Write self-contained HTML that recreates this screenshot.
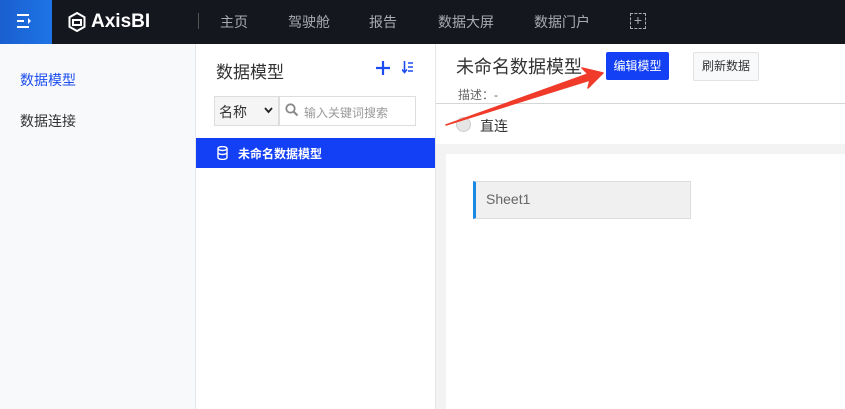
<!DOCTYPE html>
<html><head><meta charset="utf-8"><style>
*{margin:0;padding:0;box-sizing:border-box}
body{width:845px;height:409px;overflow:hidden;background:#fff;font-family:"Liberation Sans","Noto Sans CJK SC",sans-serif;position:relative}
.hdr{position:absolute;left:0;top:0;width:845px;height:44px;background:#15171f}
.menu{position:absolute;left:0;top:0;width:52px;height:44px;background:linear-gradient(90deg,#1a5fd0,#1e74e6)}
.nav{position:absolute;top:12px;color:#a9abb2;font-size:14px}
.abs{position:absolute}
</style></head><body>
<div class="hdr"></div>
<div class="menu"><svg class="abs" style="left:16px;top:13px" width="18" height="16"><path d="M1 2H13M1 8H8M1 14H13" stroke="#fff" stroke-width="2"/><path d="M12 5l3 3-3 3z" fill="#fff"/></svg></div>
<svg class="abs" style="left:68px;top:12px" width="18" height="20" viewBox="0 0 18 20"><path d="M9 1L16.5 5.2V14.8L9 19L1.5 14.8V5.2Z" fill="none" stroke="#fff" stroke-width="2"/><path d="M5 8h8v5H5z" fill="none" stroke="#fff" stroke-width="2"/></svg>
<div class="abs" style="left:91px;top:11px;color:#fff;font-size:19px;font-weight:bold">AxisBI</div>
<div class="abs" style="left:198px;top:13px;width:1px;height:16px;background:#555"></div>
<div class="nav" style="left:220px">主页</div>
<div class="nav" style="left:288px">驾驶舱</div>
<div class="nav" style="left:369px">报告</div>
<div class="nav" style="left:438px">数据大屏</div>
<div class="nav" style="left:534px">数据门户</div>
<div class="abs" style="left:630px;top:13px;width:16px;height:16px;border:1px dashed #a9abb2;color:#a9abb2;font-size:14px;line-height:13px;text-align:center">+</div>

<div class="abs" style="left:0;top:44px;width:196px;height:365px;background:#f8f9fb;border-right:1px solid #e4e6ea"></div>
<div class="abs" style="left:20px;top:70px;font-size:14px;color:#1b4df0">数据模型</div>
<div class="abs" style="left:20px;top:111px;font-size:14px;color:#333">数据连接</div>

<div class="abs" style="left:435px;top:44px;width:1px;height:365px;background:#e4e6ea"></div>
<div class="abs" style="left:216px;top:58px;font-size:17px;color:#333">数据模型</div>
<svg class="abs" style="left:376px;top:61px" width="14" height="14"><path d="M7 0V14M0 7H14" stroke="#1b4df0" stroke-width="2.2"/></svg>
<svg class="abs" style="left:402px;top:61px" width="12" height="13"><path d="M2.5 0V11M0 8.5l2.5 3 2.5-3" fill="none" stroke="#1b4df0" stroke-width="1.6"/><path d="M6 2h5M6 6h5M6 10h5" stroke="#1b4df0" stroke-width="1.6"/></svg>
<div class="abs" style="left:214px;top:96px;width:65px;height:30px;border:1px solid #ddd;background:#f5f5f5;font-size:14px;color:#333;padding:5px 4px">名称</div>
<svg class="abs" style="left:264px;top:107px" width="9" height="7"><path d="M1 1l3.5 4 3.5-4" fill="none" stroke="#222" stroke-width="1.8"/></svg>
<div class="abs" style="left:279px;top:96px;width:137px;height:30px;border:1px solid #ddd;font-size:12px;color:#999;padding:7px 0 0 24px">输入关键词搜索</div>
<svg class="abs" style="left:285px;top:103px" width="14" height="14"><circle cx="5.5" cy="5.5" r="4.2" fill="none" stroke="#888" stroke-width="1.8"/><path d="M8.5 8.5l4 4" stroke="#888" stroke-width="2"/></svg>
<div class="abs" style="left:196px;top:138px;width:239px;height:30px;background:#1440f5"></div>
<svg class="abs" style="left:217px;top:146px" width="11" height="14"><ellipse cx="5.5" cy="2.5" rx="4.5" ry="2" fill="none" stroke="#fff" stroke-width="1.4"/><path d="M1 2.5v9c0 1 2 2 4.5 2s4.5-1 4.5-2v-9M1 6.5c0 1 2 2 4.5 2s4.5-1 4.5-2" fill="none" stroke="#fff" stroke-width="1.4"/></svg>
<div class="abs" style="left:238px;top:145px;font-size:12px;color:#fff;font-weight:bold">未命名数据模型</div>

<div class="abs" style="left:456px;top:53px;font-size:18px;color:#333">未命名数据模型</div>
<div class="abs" style="left:606px;top:52px;width:63px;height:28px;background:#1440f5;border-radius:2px;color:#fff;font-size:12px;text-align:center;line-height:28px">编辑模型</div>
<div class="abs" style="left:693px;top:52px;width:66px;height:29px;background:#f8f9fb;border:1px solid #e2e2e2;border-radius:2px;color:#333;font-size:12px;text-align:center;line-height:27px">刷新数据</div>
<div class="abs" style="left:458px;top:86px;font-size:12px;color:#666">描述：-</div>
<div class="abs" style="left:436px;top:103px;width:409px;height:1px;background:#d6d6d6"></div>
<div class="abs" style="left:456px;top:117px;width:15px;height:15px;border-radius:50%;background:#e6e6e6;border:1px solid #ccc"></div>
<div class="abs" style="left:480px;top:116px;font-size:14px;color:#333">直连</div>
<div class="abs" style="left:436px;top:144px;width:409px;height:265px;background:#f3f3f3"></div>
<div class="abs" style="left:446px;top:154px;width:399px;height:255px;background:#fff"></div>
<div class="abs" style="left:473px;top:181px;width:218px;height:38px;background:#f0f0f0;border:1px solid #ddd;border-left:3px solid #1e88e5;font-size:14px;color:#666;padding:9px 0 0 10px">Sheet1</div>
<svg class="abs" style="left:0;top:0" width="845" height="409"><path d="M446 125L590 80L588 88L603 73L582 68L588 74Z" fill="#f03a2a" stroke="#f03a2a" stroke-width="1.5" stroke-linejoin="round"/></svg>
</body></html>
